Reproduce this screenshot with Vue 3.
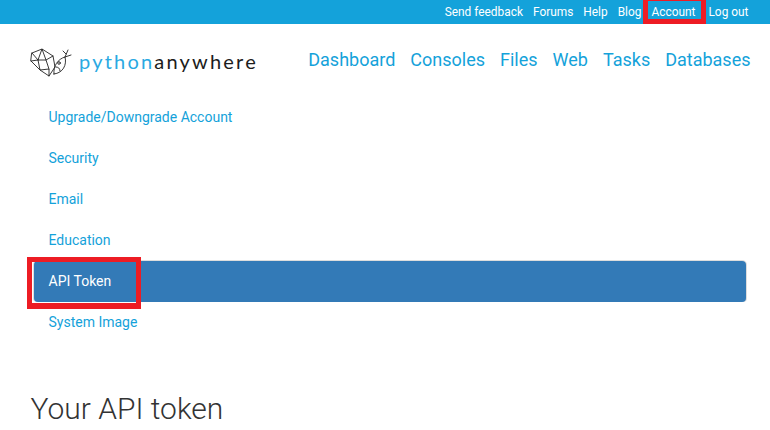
<script setup>
const top = ['Send feedback', 'Forums', 'Help', 'Blog', 'Account', 'Log out']
const nav = ['Dashboard', 'Consoles', 'Files', 'Web', 'Tasks', 'Databases']
const side = ['Upgrade/Downgrade Account', 'Security', 'Email', 'Education', 'API Token', 'System Image']
</script>

<template>
  <div class="page">
    <div class="topbar">
      <a v-for="t in top" :key="t" class="toplink" :class="{ marked: t === 'Account' }">{{ t }}</a>
    </div>
    <header class="header">
      <div class="logo">
        <svg class="mark-icon" width="42" height="32" viewBox="0 0 42 32" fill="none" stroke="#222" stroke-width="0.9" stroke-linejoin="round" stroke-linecap="round">
          <path d="M2 7 L12 3 L23 10 L25 21 L19 30 L10 24 L1 15 Z" />
          <path d="M2 7 L8 14 L12 3 L16 14 L23 10 M8 14 L16 14 L19 23 M8 14 L1 15 M8 14 L10 24 L19 23 L19 30" />
          <path d="M24 28 C23 20 28 13 35 11 C37 19 33 27 24 28 Z" />
          <path d="M35 11 L38 4 M35 11 L41 9 M36 8 L33 5" />
          <circle cx="29" cy="17" r="1.3" />
          <path d="M26 21 C28 21 30 22 30 25" />
        </svg>
        <span class="word"><span class="py">python</span><span class="any">anywhere</span></span>
      </div>
      <nav class="mainnav">
        <a v-for="n in nav" :key="n">{{ n }}</a>
      </nav>
    </header>
    <ul class="side">
      <li v-for="s in side" :key="s" :class="{ active: s === 'API Token' }">
        <a>{{ s }}</a>
        <span v-if="s === 'API Token'" class="mark"></span>
      </li>
    </ul>
    <h1 class="title">Your API token</h1>
  </div>
</template>

<style>
html, body { margin: 0; overflow: hidden; background: #fff; }
</style>

<style scoped>
.page {
  width: 770px;
  height: 430px;
  overflow: hidden;
  font-family: Roboto, "Liberation Sans", sans-serif;
  font-size: 14px;
  color: #333;
}
.topbar {
  height: 24px;
  background: #14a2da;
  display: flex;
  justify-content: flex-end;
  align-items: center;
  gap: 10px;
  padding-right: 21.5px;
  color: #fff;
  font-size: 11.9px;
}
.toplink { position: relative; white-space: nowrap; }
.toplink.marked { margin-right: 3px; }
.marked::after {
  content: "";
  position: absolute;
  left: -8.5px;
  right: -10.5px;
  top: -6px;
  bottom: -5px;
  box-sizing: border-box;
  border: solid #ed1c24;
  border-width: 2px 5px 5px 5px;
}
.header {
  height: 72.5px;
  display: flex;
  align-items: center;
  justify-content: space-between;
  padding: 0 19.5px 0 30px;
}
.logo { display: flex; align-items: center; }
.mark-icon { margin-top: 3px; }
.word {
  font-family: Lato, "Open Sans", sans-serif;
  font-size: 20px;
  font-weight: 400;
  letter-spacing: 2.2px;
  margin-left: 7px;
  margin-top: 2px;
}
.py { color: #2aa9e2; }
.any { color: #1c1c1c; }
.mainnav {
  display: flex;
  gap: 15px;
  font-size: 18px;
  color: #14a2da;
  margin-top: -1px;
}
.side {
  list-style: none;
  margin: 0;
  padding: 0 24px 0 34px;
}
.side li {
  position: relative;
  height: 41px;
  line-height: 41px;
  padding-left: 14.5px;
  color: #14a2da;
  box-sizing: border-box;
}
.side li.active {
  background: #337ab7;
  color: #fff;
  border-radius: 4px;
  box-shadow: 0 -1px 0 #ddd, 1px 0 0 #ddd, -1px 0 0 #ddd;
}
.mark {
  position: absolute;
  left: -7px;
  top: -4px;
  width: 114px;
  height: 52px;
  box-sizing: border-box;
  border: solid #ed1c24;
  border-width: 5px 5px 6px 5px;
}
.title {
  margin: 48px 0 0 30.5px;
  font-size: 30px;
  font-weight: 300;
  line-height: 36px;
  color: #333;
}
</style>
